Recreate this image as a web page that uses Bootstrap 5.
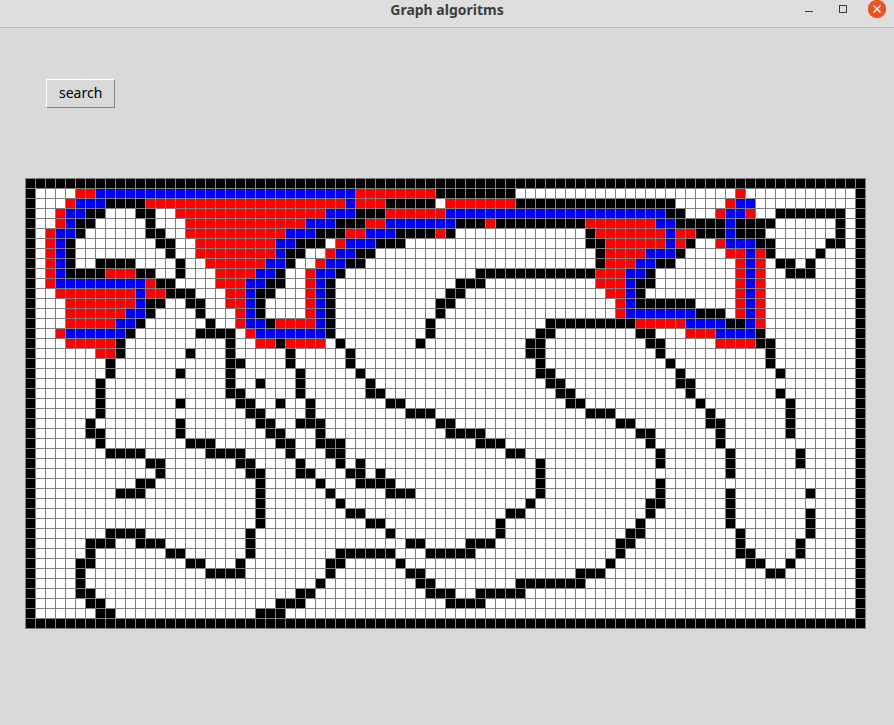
<!DOCTYPE html>
<html lang="en">
<head>
<meta charset="utf-8">
<meta name="viewport" content="width=device-width, initial-scale=1">
<title>Graph algoritms</title>
<link href="https://cdn.jsdelivr.net/npm/bootstrap@5.3.0/dist/css/bootstrap.min.css" rel="stylesheet">
<style>
  body { background: #d9d9d9; color: #000; font-family: "Noto Sans", "Open Sans", sans-serif; font-size: 14px; line-height: 20px; }
  .titlebar { display: grid; grid-template-columns: 1fr auto 1fr; height: 28px; padding: 0 8px 8px 8px; background: #dedede; border-bottom: 1px solid #b8b8b8; }
  .titlebar h1 { font-size: 14px; line-height: 20px; color: #3d3d3d; }
  .win-controls { gap: 16px; }
  .win-btn { width: 18px; height: 18px; color: #3d3d3d; line-height: 0; }
  .win-btn svg { display: block; }
  .workspace { padding: 51px 28px 32px 25px; }
  .tk-btn { margin-left: 21px; padding: 3px 12px 4px; border: 1px solid; border-color: #fff #828282 #828282 #fff; border-radius: 0; background: #d9d9d9; color: #000; }
  .tk-btn:active { border-color: #828282 #fff #fff #828282; }
  .maze { margin-top: 70px; max-width: 841px; }
  .maze svg { width: 100%; height: auto; display: block; }
</style>
<script src="https://cdn.jsdelivr.net/npm/bootstrap@5.3.0/dist/js/bootstrap.bundle.min.js"></script>
</head>
<body>
<header class="titlebar">
  <span></span>
  <h1 class="m-0 fw-bold">Graph algoritms</h1>
  <div class="win-controls d-flex justify-content-end align-items-start">
    <button type="button" class="win-btn btn p-0 border-0 rounded-0" aria-label="Minimize">
      <svg width="18" height="18" viewBox="0 0 18 18" shape-rendering="crispEdges"><path d="M5 11h8v1H5z" fill="currentColor"/></svg>
    </button>
    <button type="button" class="win-btn btn p-0 border-0 rounded-0" aria-label="Maximize">
      <svg width="18" height="18" viewBox="0 0 18 18" shape-rendering="crispEdges"><path d="M5.500 5.500h7v7h-7z" fill="none" stroke="currentColor"/></svg>
    </button>
    <button type="button" class="win-btn btn p-0 border-0 rounded-0" aria-label="Close">
      <svg width="18" height="18" viewBox="0 0 18 18"><circle cx="9" cy="9" r="9.200" fill="#e95420"/><path d="M5.500 5.500l7 7m0-7l-7 7" stroke="#fff" stroke-width="1.300"/></svg>
    </button>
  </div>
</header>
<main class="workspace">
  <button type="button" class="tk-btn d-block">search</button>
  <div class="maze" id="maze"></div>
</main>
<script>
  // Each row lists runs of cells: k = wall, r = visited, b = path, then first-last column.
  const COLS = 84;
  const COLORS = { k: "#000", r: "#f00", b: "#00f" };
  const ROWS = [
    "k0-83",
    "r5-6 b7-32 r33-40 k41-48 r71",
    "r4 b5-7 k8-11 r12-31 b32 r33-35 k36-40 r42-48 k49-64 r70 b71-72",
    "r3 b4-5 k6-7 k11-12 r15-29 b30-32 k33-35 r36-41 b42-63 k64-65 r69 b70-71 r72 k75-81",
    "r3 b4 k5-6 k12 r16-27 b28-30 k31-33 r34-35 b36-42 k43-45 r46 k47-55 r56-62 b63-64 k65-69 b70 k71-74 k81",
    "r2 b3-4 k5 k12-13 r16-25 b26-28 k29-31 r32-33 b34-36 k37-40 r41 k42 k56 r57-63 b64 r65-66 k67-69 b70 k71-73 k81",
    "r2 b3 k4 k13-14 r17-24 b25-26 k27-29 r31 b32-34 k35-37 k56-57 r58-63 b64 r65 k66 r69 b70-72 k73-74 k80-81",
    "r2 b3 k4 k14 r17-24 b25 k26-27 r30 b31-32 k33-34 k57 r58-61 b62-64 k65 r70-71 b72 r73 k74 k79",
    "r2 b3 k4 k7-10 k15 r18-23 b24-25 k26 r29 b30-31 k32-33 k57 r58-60 b61-62 k63-64 r71 b72 r73 k75-76 k78",
    "r2 b3 k4-7 r8-10 k11-12 k15 r19-22 b23-24 k25 r28 b29-30 k31 k45-56 r57-59 b60-61 k62 r71 b72 r73 k76-78",
    "r2 b3-11 r12 k13-14 r19-21 b22-23 k24-25 r28 b29 k30 k43-45 r57-59 b60 k61-62 r71 b72 r73",
    "r3-10 b11 r12-13 k14-16 r20-21 b22 k23-24 r28 b29 k30 k42-43 r58-59 b60 k61 r71 b72 r73",
    "r4-10 b11 k12-13 k16-17 r20-21 b22 k23 r28 b29 k30 k41-42 r59 b60 k61-66 r71 b72 r73",
    "r4-9 b10-11 k12 k17 r21 b22 k23 r28 b29 k30 k41 r59 b60-66 k67-69 r71 b72 r73",
    "r4-8 b9-10 k11 k18 r21 b22-23 k24 r25-28 b29 k30 k40 k52-60 r61-65 b66-69 k70-71 b72 r73",
    "r3 b4-9 k10 k17-20 r22 b23-29 k30 k40 k51-52 k61-62 r66-68 b69-72 k73",
    "r4-8 k9 k20 r23-24 k25 r26-29 k31 k39 k50-51 k62-63 r69-72 k73-74",
    "r7-8 k9 k16 k20 k26 k32 k50-51 k63 k74",
    "k8 k20-21 k26 k32 k51 k64 k74",
    "k8 k15 k20 k27 k33 k51-52 k65 k75",
    "k7 k20 k23 k27 k34 k52-53 k65-66",
    "k7 k20-21 k27 k34-35 k53-54 k66 k75",
    "k7 k15 k21-22 k25 k28 k36-37 k54-55 k67 k76",
    "k7 k22-23 k28 k38-40 k56-58 k68 k76",
    "k6 k15 k23-24 k27-29 k41-42 k59-60 k68-69 k76",
    "k6-7 k15 k24-25 k29 k42-45 k61-62 k69 k76",
    "k7 k16-18 k25-26 k29-31 k45-47 k62 k69",
    "k8-11 k18-21 k26 k30-31 k48-49 k63 k70 k77",
    "k12-13 k21-22 k27 k31 k33 k51 k63 k70 k77",
    "k13 k22-23 k27-28 k32-33 k35 k51 k70",
    "k11-12 k23 k29 k33-36 k51 k63",
    "k9-11 k23 k30 k36-38 k51 k63 k70 k78",
    "k23 k31 k50 k62-63 k70",
    "k23 k32-33 k48-49 k62 k70 k78",
    "k23 k34-35 k47 k61 k70 k78",
    "k8-11 k22 k36 k47 k60-61 k71 k78",
    "k6-8 k11-13 k22 k38-39 k44-46 k59-60 k71 k77",
    "k6 k14-15 k22 k31-36 k40-44 k59 k71-72 k77",
    "k5-6 k16-17 k21 k30-31 k37 k58 k72-73 k76",
    "k5 k18-21 k30 k38-39 k55-57 k74-75",
    "k5 k29 k39-40 k49-55",
    "k5-6 k27-28 k40-42 k45-49",
    "k6-7 k25-27 k42-45",
    "k7-8 k23-25",
    "k0-83"
  ];
  const w = COLS * 10 + 1, h = ROWS.length * 10 + 1;
  let out = `<svg viewBox="0 0 ${w} ${h}" shape-rendering="crispEdges" role="img" aria-label="Search grid"><rect width="${w}" height="${h}" fill="#fff"/>`;
  ROWS.forEach((row, y) => {
    ("k0 " + row + " k83").split(" ").forEach(run => {
      const [a, b = a] = run.slice(1).split("-").map(Number);
      out += `<rect x="${a * 10}" y="${y * 10}" width="${(b - a + 1) * 10}" height="10" fill="${COLORS[run[0]]}"/>`;
    });
  });
  let lines = "";
  for (let x = 0; x <= COLS; x++) lines += `M${x * 10} 0h1v${h}h-1z`;
  for (let y = 0; y <= ROWS.length; y++) lines += `M0 ${y * 10}h${w}v1h-${w}z`;
  out += `<path d="${lines}" fill="#808080" fill-rule="nonzero"/></svg>`;
  document.getElementById("maze").innerHTML = out;
</script>
</body>
</html>
